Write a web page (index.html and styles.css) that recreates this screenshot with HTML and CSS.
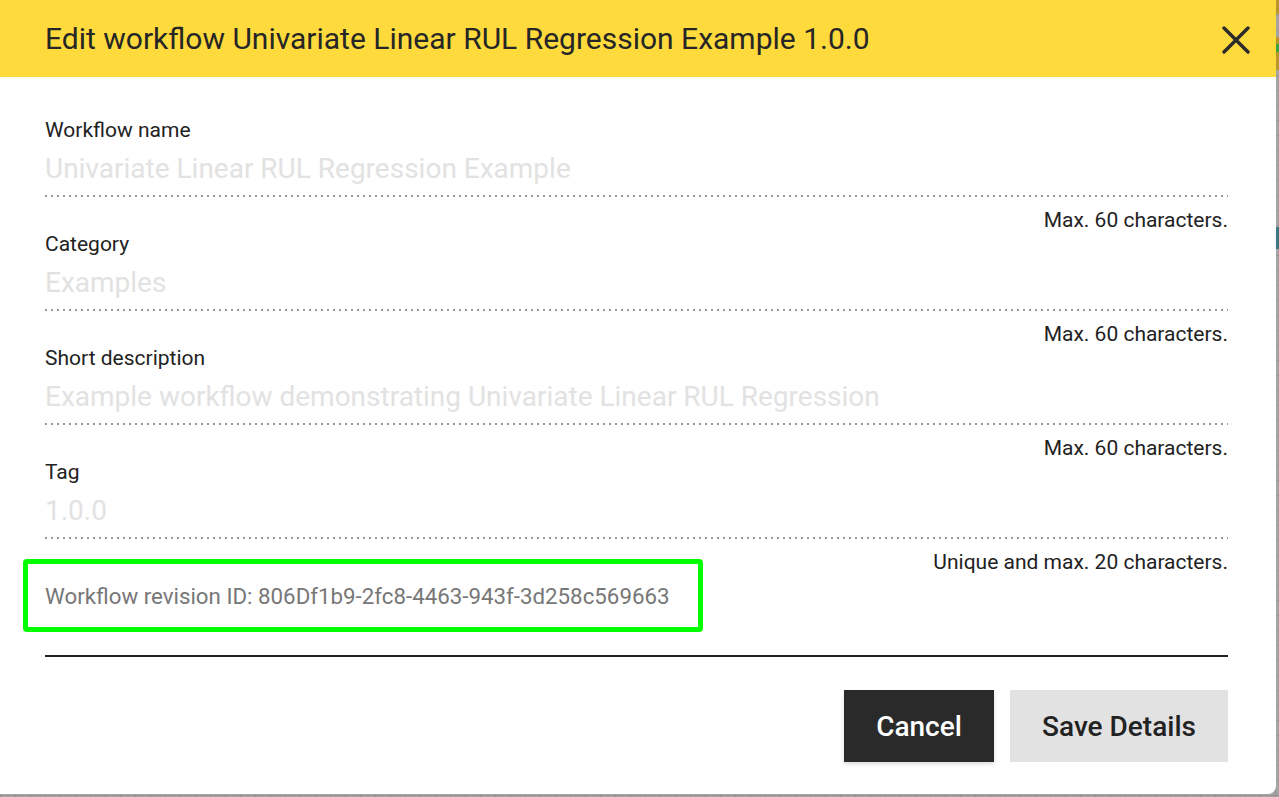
FILE: index.html
```html
<!DOCTYPE html>
<html lang="en">
<head>
<meta charset="utf-8">
<title>Edit workflow</title>
<link rel="stylesheet" href="styles.css">
</head>
<body>
<div class="backdrop">
  <span class="bg-mark bg-gold1"></span>
  <span class="bg-mark bg-gold2"></span>
  <span class="bg-mark bg-green"></span>
  <span class="bg-mark bg-teal"></span>
  <div class="modal">
    <header class="modal-header">
      <h1 class="modal-title">Edit workflow Univariate Linear RUL Regression Example 1.0.0</h1>
      <button class="close-btn" aria-label="Close">
        <svg width="28" height="28" viewBox="0 0 28 28"><path d="M2 2 L26 26 M26 2 L2 26" stroke="#2b2b2b" stroke-width="3.4" stroke-linecap="round" fill="none"/></svg>
      </button>
    </header>
    <div class="modal-body">
      <div class="field">
        <label class="field-label">Workflow name</label>
        <div class="field-input">Univariate Linear RUL Regression Example</div>
        <div class="dots"></div>
        <div class="helper">Max. 60 characters.</div>
      </div>
      <div class="field">
        <label class="field-label">Category</label>
        <div class="field-input">Examples</div>
        <div class="dots"></div>
        <div class="helper">Max. 60 characters.</div>
      </div>
      <div class="field">
        <label class="field-label">Short description</label>
        <div class="field-input">Example workflow demonstrating Univariate Linear RUL Regression</div>
        <div class="dots"></div>
        <div class="helper">Max. 60 characters.</div>
      </div>
      <div class="field">
        <label class="field-label">Tag</label>
        <div class="field-input">1.0.0</div>
        <div class="dots"></div>
        <div class="helper">Unique and max. 20 characters.</div>
      </div>
      <div class="revision">Workflow revision ID: 806Df1b9-2fc8-4463-943f-3d258c569663</div>
      <div class="separator"></div>
      <div class="actions">
        <button class="btn btn-dark">Cancel</button>
        <button class="btn btn-light">Save Details</button>
      </div>
    </div>
  </div>
</div>
</body>
</html>
```

FILE: styles.css
```css
* { box-sizing: border-box; }
html, body { margin: 0; padding: 0; }
body {
  width: 1279px;
  height: 797px;
  overflow: hidden;
  font-family: Roboto, "Liberation Sans", sans-serif;
  background-color: #a4a4a4;
  background-image:
    linear-gradient(to right, rgba(0,0,0,0.08) 1px, transparent 1px),
    linear-gradient(to bottom, rgba(0,0,0,0.08) 1px, transparent 1px);
  background-size: 15px 15px;
}
.backdrop {
  position: relative;
  width: 1279px;
  height: 797px;
}
.bg-mark { position: absolute; left: 1276px; width: 3px; }
.bg-gold1 { top: 0; height: 14px; background: #b8962a; }
.bg-gold2 { top: 37px; height: 33px; background: #b8962a; }
.bg-green { top: 44px; height: 8px; background: #3aa33a; }
.bg-teal { top: 227px; height: 22px; background: #3f7683; }

.modal {
  position: relative;
  width: 1276px;
  height: 794px;
  background: #fff;
  border-bottom-right-radius: 8px;
  display: flex;
  flex-direction: column;
  overflow: hidden;
}
.modal-header {
  height: 77px;
  flex: none;
  background: #ffda3d;
  display: flex;
  align-items: center;
  justify-content: space-between;
  padding: 0 26px 0 45px;
}
.modal-title {
  margin: 0;
  font-size: 30px;
  line-height: 36px;
  font-weight: 400;
  color: #262626;
}
.close-btn {
  border: 0;
  background: transparent;
  padding: 0;
  width: 28px;
  height: 28px;
  display: flex;
  margin-top: 2px;
}
.modal-body {
  padding: 41px 48px 32px 45px;
  display: flex;
  flex-direction: column;
}
.field { display: flex; flex-direction: column; }
.field-label {
  font-size: 21px;
  line-height: 24px;
  color: #222;
}
.field-input {
  font-size: 28px;
  line-height: 34px;
  color: #e2e2e2;
  margin-top: 10px;
  padding-bottom: 9px;
  white-space: nowrap;
}
.dots {
  height: 2px;
  background-image: repeating-linear-gradient(to right, #9a9a9a 0 2px, transparent 2px 6px);
}
.helper {
  text-align: right;
  font-size: 21px;
  line-height: 24px;
  color: #222;
  margin-top: 11px;
}
.revision {
  margin: -15px 0 0 -22px;
  width: 680px;
  height: 73px;
  border: 5px solid #00ff00;
  border-radius: 4px;
  padding-left: 17px;
  display: flex;
  align-items: center;
  font-size: 22.3px;
  color: #777;
}
.separator {
  height: 2px;
  background: #222;
  margin-top: 23px;
}
.actions {
  display: flex;
  justify-content: flex-end;
  gap: 16px;
  margin-top: 33px;
}
.btn {
  height: 72px;
  border: 0;
  font-family: Roboto, "Liberation Sans", sans-serif;
  font-size: 28px;
  font-weight: 500;
  padding: 0;
}
.btn-dark {
  width: 150px;
  background: #2a2a2a;
  color: #fff;
  box-shadow: 0 2px 4px rgba(0,0,0,0.15);
}
.btn-light {
  width: 218px;
  background: #e2e2e2;
  color: #222;
}
```
